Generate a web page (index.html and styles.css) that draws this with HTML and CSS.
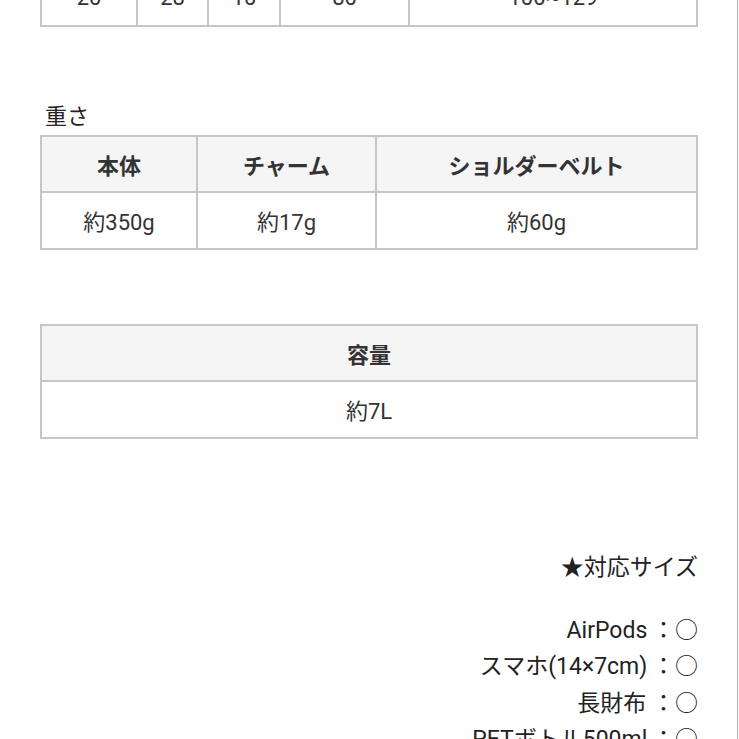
FILE: index.html
```html
<!DOCTYPE html>
<html lang="ja">
<head>
<meta charset="utf-8">
<link rel="stylesheet" href="styles.css">
</head>
<body>
<div class="frame">
<div class="page">
  <table class="spec spec-size">
    <colgroup>
      <col style="width:96px"><col style="width:71px"><col style="width:72px"><col style="width:129px"><col>
    </colgroup>
    <tr><td>20</td><td>28</td><td>10</td><td>80</td><td>100~129</td></tr>
  </table>

  <p class="label">重さ</p>
  <table class="spec">
    <colgroup>
      <col style="width:156px"><col style="width:179px"><col>
    </colgroup>
    <tr><th>本体</th><th>チャーム</th><th>ショルダーベルト</th></tr>
    <tr><td>約350g</td><td>約17g</td><td>約60g</td></tr>
  </table>

  <table class="spec spec-cap">
    <tr><th>容量</th></tr>
    <tr><td>約7L</td></tr>
  </table>

  <div class="fit">
    <p class="fit-title">★対応サイズ</p>
    <ul class="fit-list">
      <li>AirPods&#8201;：○</li>
      <li>スマホ(14×7cm)&#8201;：○</li>
      <li>長財布 ：○</li>
      <li>PETボトル500ml&#8201;：○</li>
    </ul>
  </div>
</div>
</div>
</body>
</html>
```

FILE: styles.css
```css
html, body {
  margin: 0;
  padding: 0;
  background: #ffffff;
}
body {
  font-family: Roboto, "Noto Sans CJK JP", sans-serif;
  color: #333333;
  overflow: hidden;
}
.frame {
  width: 737px;
  height: 739px;
  border-right: 1px solid #b0b0b0;
  overflow: hidden;
}
.page {
  width: 658px;
  padding-left: 40px;
}
.spec {
  width: 658px;
  border-collapse: collapse;
  table-layout: fixed;
  border: 2px solid #c6c6c6;
}
.spec th,
.spec td {
  border: 2px solid #c6c6c6;
  height: 54.5px;
  padding: 0;
  text-align: center;
  font-size: 22px;
  color: #333333;
}
.spec th {
  background: #f5f5f6;
  font-weight: bold;
}
.spec-size {
  margin-top: -32px;
}
.label {
  margin: 76px 0 0 5px;
  font-size: 22px;
  line-height: 28px;
  color: #222222;
  height: 32px;
}
.spec-cap {
  margin-top: 74px;
}
.fit {
  margin-top: 114px;
  text-align: right;
  color: #222222;
  font-size: 23px;
}
.fit-title {
  margin: 0;
  line-height: 30px;
}
.fit-list {
  list-style: none;
  margin: 30px 0 0;
  padding: 0;
}
.fit-list li {
  line-height: 36.5px;
}
```
